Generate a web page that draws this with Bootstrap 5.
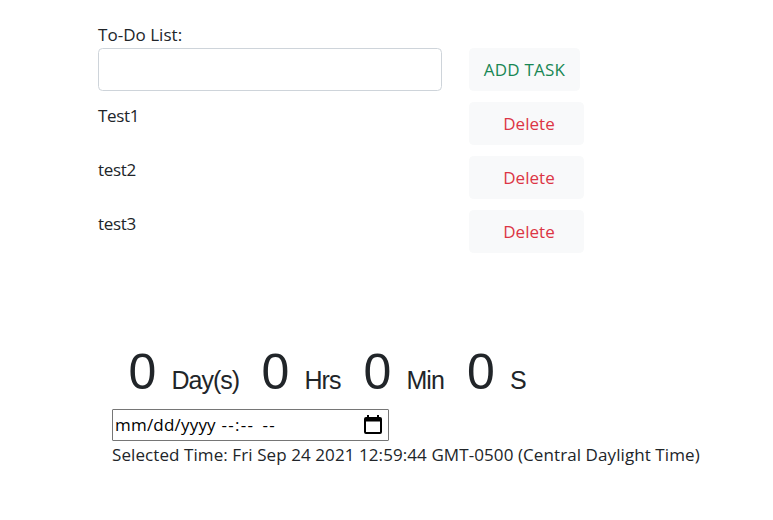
<!DOCTYPE html>
<html lang="en">
<head>
<meta charset="utf-8">
<meta name="viewport" content="width=device-width, initial-scale=1">
<title>To-Do List</title>
<link href="https://cdn.jsdelivr.net/npm/bootstrap@5.3.0/dist/css/bootstrap.min.css" rel="stylesheet">
<style>
  body { font-family: "Open Sans", "Noto Sans", sans-serif; font-size: 17px; line-height: 27px; color: #212529; background: #fff; letter-spacing: -.3px; }
  .todo { padding: 21px 0 0 98px; }
  .todo label { letter-spacing: .03px; }
  .todo-grid { display: grid; grid-template-columns: 344px auto; column-gap: 27px; row-gap: 11px; justify-items: start; }
  .todo .form-control { height: 43px; border-radius: 4.5px; border-color: #ced4da; }
  .todo .btn { height: 43px; font-size: 17px; line-height: 27px; border-radius: 4.5px; background: #f8f9fa; border-color: #f8f9fa; padding: 7px 0; letter-spacing: .05px; }
  .todo .btn-add { width: 111px; letter-spacing: .2px; }
  .todo .btn-del { width: 115px; padding-left: 5px; }
  .timer { padding: 87px 0 0 112px; }
  .countdown { height: 69px; padding-left: 16.5px; font-family: "Liberation Sans", Arial, sans-serif; line-height: 64px; }
  .digit { font-size: 50px; width: 43px; letter-spacing: 0; }
  .unit { font-size: 25px; letter-spacing: -1px; }
  .unit-day { width: 90px; }
  .unit-hrs { width: 59px; }
  .unit-min { width: 60.5px; }
  .picker { width: 277px; height: 32px; border: 1px solid #767676; border-radius: 1px; padding: 0 6px 0 2px; color: #000; }
  .picker-text { white-space: pre; letter-spacing: .2px; line-height: 27px; padding-bottom: 1px; }
  .picker-blank { letter-spacing: 1.3px; margin-left: 1px; }
  .picker-half { margin-left: 2.5px; }
  .selected { white-space: nowrap; letter-spacing: .085px; }
</style>
</head>
<body>
<section class="todo">
  <label for="task" class="d-block">To-Do List:</label>
  <div class="todo-grid">
    <input id="task" type="text" class="form-control">
    <button class="btn btn-light text-success btn-add">ADD TASK</button>
    <span>Test1</span><button class="btn btn-light text-danger btn-del">Delete</button>
    <span>test2</span><button class="btn btn-light text-danger btn-del">Delete</button>
    <span>test3</span><button class="btn btn-light text-danger btn-del">Delete</button>
  </div>
</section>
<section class="timer">
  <div class="countdown d-flex align-items-baseline">
    <span class="digit">0</span><span class="unit unit-day">Day(s)</span>
    <span class="digit">0</span><span class="unit unit-hrs">Hrs</span>
    <span class="digit">0</span><span class="unit unit-min">Min</span>
    <span class="digit">0</span><span class="unit">S</span>
  </div>
  <div class="picker d-flex align-items-center justify-content-between">
    <span class="picker-text">mm/dd/yyyy <span class="picker-blank">--:-- <span class="picker-half">--</span></span></span>
    <svg width="18" height="20" viewBox="0 0 18 20" aria-hidden="true"><path fill="#000" fill-rule="evenodd" d="M2 2h1V0h2v2h8V0h2v2h1a2 2 0 0 1 2 2v13a2 2 0 0 1-2 2H2a2 2 0 0 1-2-2V4a2 2 0 0 1 2-2zM2 6.500v10.500h14V6.500z"/></svg>
  </div>
  <div class="selected">Selected Time: Fri Sep 24 2021 12:59:44 GMT-0500 (Central Daylight Time)</div>
</section>
<script src="https://cdn.jsdelivr.net/npm/bootstrap@5.3.0/dist/js/bootstrap.bundle.min.js"></script>
</body>
</html>
